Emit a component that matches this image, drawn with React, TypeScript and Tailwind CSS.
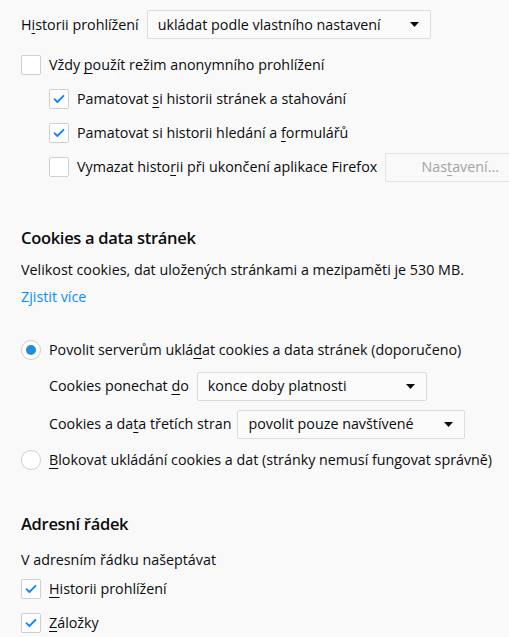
import React from "react";

const font = { fontFamily: "'Open Sans', 'Noto Sans', sans-serif" };

function Key({ children }: { children: React.ReactNode }) {
  return <span className="underline underline-offset-[3px] decoration-1">{children}</span>;
}

function Checkbox({ checked }: { checked?: boolean }) {
  return (
    <span className="w-[20px] h-[20px] shrink-0 rounded-[2px] border border-[#cfcfd3] bg-white flex items-center justify-center">
      {checked && (
        <svg width="12" height="10" viewBox="0 0 12 10" fill="none">
          <path d="M1.5 5.2 L4.4 8 L10.5 1.8" stroke="#0a84ff" strokeWidth="1.8" strokeLinecap="round" strokeLinejoin="round" />
        </svg>
      )}
    </span>
  );
}

function Radio({ checked }: { checked?: boolean }) {
  return (
    <span className="w-[20px] h-[20px] shrink-0 rounded-full border border-[#cfcfd3] bg-white flex items-center justify-center">
      {checked && <span className="w-[10px] h-[10px] rounded-full bg-[#1b8ee0]" />}
    </span>
  );
}

function Select({ value, width }: { value: string; width: string }) {
  return (
    <div className={`${width} h-[29px] shrink-0 rounded-[2px] border border-[#dcdcdf] bg-[#fbfbfb] flex items-center justify-between pl-[10px] pr-[11px]`}>
      <span>{value}</span>
      <svg width="9" height="5" viewBox="0 0 9 5">
        <path d="M0 0 H9 L4.5 5 Z" fill="#0c0c0d" />
      </svg>
    </div>
  );
}

export default function App() {
  return (
    <div className="w-[509px] h-[637px] overflow-hidden bg-[#f9f9fa] text-[#0c0c0d] text-[14.3px] leading-[20px]" style={font}>
      <div className="pl-[21px]">
        {/* Historie */}
        <div className="mt-[10px] h-[29px] flex items-center gap-[8px]">
          <span>H<Key>i</Key>storii prohlížení</span>
          <Select value="ukládat podle vlastního nastavení" width="w-[284px]" />
        </div>

        <div className="mt-[9px] h-[34px] flex items-center gap-[8px]">
          <Checkbox />
          <span>Vždy <Key>p</Key>oužít režim anonymního prohlížení</span>
        </div>
        <div className="pl-[28px]">
          <div className="h-[34px] flex items-center gap-[8px]">
            <Checkbox checked />
            <span>Pamatovat <Key>s</Key>i historii stránek a stahování</span>
          </div>
          <div className="h-[34px] flex items-center gap-[8px]">
            <Checkbox checked />
            <span>Pamatovat si historii hledání a <Key>f</Key>ormulářů</span>
          </div>
          <div className="h-[34px] flex items-center gap-[8px]">
            <Checkbox />
            <span className="whitespace-nowrap">Vymazat histo<Key>r</Key>ii při ukončení aplikace Firefox</span>
            <button className="w-[150px] h-[29px] shrink-0 rounded-[2px] border border-[#e3e3e6] bg-[#f9f9fa] text-[#a3a3a6]">
              Nas<Key>t</Key>avení...
            </button>
          </div>
        </div>

        {/* Cookies */}
        <h2 className="mt-[42px] h-[24px] text-[16.5px] leading-[24px] font-semibold tracking-[-0.3px]">Cookies a data stránek</h2>
        <p className="mt-[10px]">Velikost cookies, dat uložených stránkami a mezipaměti je 530 MB.</p>
        <a className="mt-[7px] block text-[#0a8dff]">Zjistit více</a>

        <div className="mt-[26px] h-[34px] flex items-center gap-[8px]">
          <Radio checked />
          <span>Povolit serverům uklá<Key>d</Key>at cookies a data stránek (doporučeno)</span>
        </div>
        <div className="pl-[28px]">
          <div className="h-[38px] flex items-center gap-[8px]">
            <span>Cookies ponechat <Key>d</Key>o</span>
            <Select value="konce doby platnosti" width="w-[230px]" />
          </div>
          <div className="h-[38px] flex items-center gap-[6px]">
            <span>Cookies a da<Key>t</Key>a třetích stran</span>
            <Select value="povolit pouze navštívené" width="w-[228px]" />
          </div>
        </div>
        <div className="h-[34px] flex items-center gap-[8px]">
          <Radio />
          <span><Key>B</Key>lokovat ukládání cookies a dat (stránky nemusí fungovat správně)</span>
        </div>

        {/* Adresni radek */}
        <h2 className="mt-[35px] h-[24px] text-[16.5px] leading-[24px] font-semibold tracking-[-0.3px]">Adresní řádek</h2>
        <p className="mt-[14px]">V adresním řádku našeptávat</p>
        <div className="mt-[2px] h-[34px] flex items-center gap-[8px]">
          <Checkbox checked />
          <span><Key>H</Key>istorii prohlížení</span>
        </div>
        <div className="h-[34px] flex items-center gap-[8px]">
          <Checkbox checked />
          <span><Key>Z</Key>áložky</span>
        </div>
      </div>
    </div>
  );
}
